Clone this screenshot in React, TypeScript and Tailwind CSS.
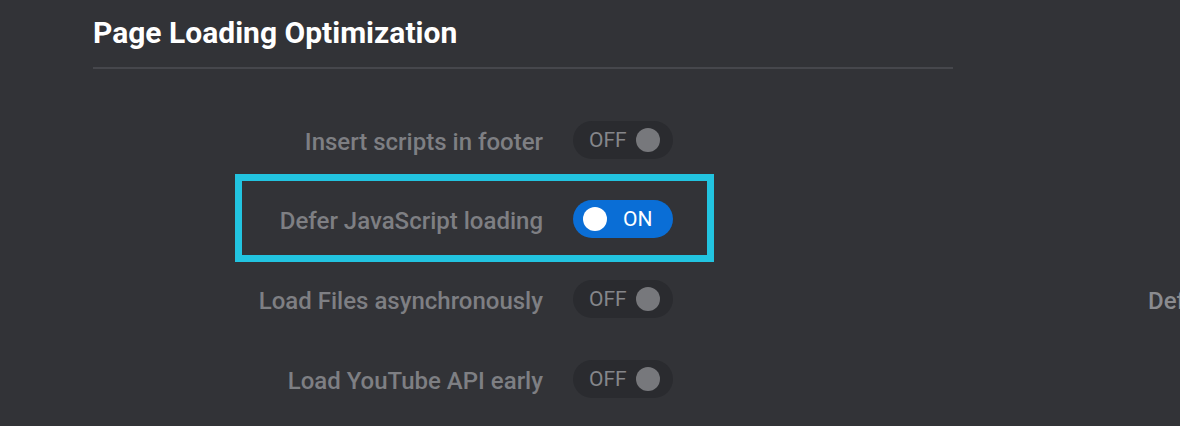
import React from "react";

function Toggle({ on }: { on?: boolean }) {
  if (on) {
    return (
      <div className="flex h-[38px] w-[100px] shrink-0 items-center rounded-full bg-[#0a6ed6] pl-[10px]">
        <span className="h-[24px] w-[24px] rounded-full bg-white" />
        <span className="ml-[16px] text-[21px] leading-none text-white">ON</span>
      </div>
    );
  }
  return (
    <div className="flex h-[38px] w-[100px] shrink-0 items-center rounded-full bg-[#2a2b2f] pl-[16px]">
      <span className="text-[21px] leading-none text-[#85868a]">OFF</span>
      <span className="ml-[9px] h-[24px] w-[24px] rounded-full bg-[#77787c]" />
    </div>
  );
}

function Row({ label, children }: { label: string; children?: React.ReactNode }) {
  return (
    <div className="flex items-center">
      <div className="w-[450px] shrink-0 pt-[3px] text-right text-[24px] font-medium leading-none text-[#7e7f83]">
        {label}
      </div>
      <div className="ml-[30px]">
        <Toggle />
      </div>
      {children}
    </div>
  );
}

export default function App() {
  return (
    <div
      className="h-[426px] w-[1180px] overflow-hidden bg-[#323337] pl-[93px]"
      style={{ fontFamily: "Roboto, 'Liberation Sans', sans-serif" }}
    >
      <div className="pt-[14px]">
        <h1 className="text-[30px] font-bold leading-[38px] text-white">Page Loading Optimization</h1>
        <div className="mt-[15px] h-[2px] w-[860px] bg-[#46474c]" />
      </div>

      <div className="mt-[52px] flex flex-col">
        <Row label="Insert scripts in footer" />

        <div className="ml-[142px] mt-[15px] flex w-[479px] items-center border-[7px] border-[#22c4e0] pb-[17px] pt-[19px]">
          <div className="w-[301px] shrink-0 pt-[3px] text-right text-[24px] font-medium leading-none text-[#7e7f83]">
            Defer JavaScript loading
          </div>
          <div className="ml-[30px]">
            <Toggle on />
          </div>
        </div>

        <div className="mt-[18px]">
          <Row label="Load Files asynchronously">
            <div className="ml-[475px] whitespace-nowrap pt-[3px] text-[24px] font-medium leading-none text-[#8a8b8f]">
              Defer CSS loading
            </div>
          </Row>
        </div>

        <div className="mt-[42px]">
          <Row label="Load YouTube API early" />
        </div>
      </div>
    </div>
  );
}
